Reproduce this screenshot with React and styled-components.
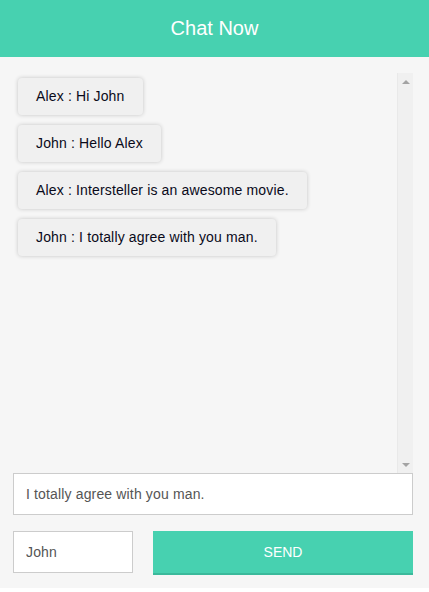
import React from "react";
import styled, { createGlobalStyle } from "styled-components";

const GlobalStyle = createGlobalStyle`
  body {
    margin: 0;
    background: #ffffff;
    font-family: "Liberation Sans", Arial, sans-serif;
  }
`;

const ChatPageStyles = styled.div`
  width: 429px;
  height: 588px;
  background: #f6f6f6;
  display: flex;
  flex-direction: column;
`;

const Header = styled.header`
  height: 57px;
  background: #47d1b0;
  color: #ffffff;
  font-size: 20px;
  display: flex;
  align-items: center;
  justify-content: center;
  flex-shrink: 0;
`;

const Body = styled.div`
  padding: 15px 16px 0 13px;
  display: flex;
  flex-direction: column;
`;

const MessagePane = styled.div`
  height: 401px;
  display: flex;
`;

const MessageList = styled.div`
  flex: 1;
  overflow: hidden;
  display: flex;
  flex-direction: column;
  align-items: flex-start;
  gap: 10px;
  padding: 6px 5px;
  box-sizing: border-box;
`;

const ScrollTrack = styled.div`
  width: 16px;
  margin-top: 1px;
  box-sizing: border-box;
  background: #f0f0f0;
  border-left: 1px solid #e9e9e9;
  display: flex;
  flex-direction: column;
  justify-content: space-between;
  align-items: center;
  padding: 7px 0 6px;
`;

const ScrollArrow = styled.span`
  width: 0;
  height: 0;
  border-left: 4px solid transparent;
  border-right: 4px solid transparent;
  ${(props) =>
    props.$down
      ? "border-top: 4px solid #a3a3a3;"
      : "border-bottom: 4px solid #a3a3a3;"}
`;

const Bubble = styled.div`
  background: #f0f0f0;
  border-radius: 4px;
  box-shadow: 0 0 4px rgba(0, 0, 0, 0.2);
  padding: 10px 18px;
  font-size: 14px;
  line-height: 17px;
  letter-spacing: 0.15px;
  color: #0a0a1a;
  white-space: nowrap;
`;

const TextInput = styled.input`
  box-sizing: border-box;
  height: 42px;
  border: 1px solid #cccccc;
  background: #ffffff;
  padding: 0 12px;
  font-family: "Liberation Sans", Arial, sans-serif;
  font-size: 14px;
  letter-spacing: 0.15px;
  color: #555555;
  outline: none;
  width: ${(props) => props.$width || "100%"};
  flex-shrink: 0;
`;

const BottomRow = styled.div`
  display: flex;
  gap: 20px;
  margin-top: 16px;
  align-items: flex-start;
`;

const SendButton = styled.button`
  flex: 1;
  height: 44px;
  border: none;
  border-bottom: 2px solid #3bb99b;
  background: #47d1b0;
  color: #ffffff;
  font-family: "Liberation Sans", Arial, sans-serif;
  font-size: 14px;
  padding: 0;
  cursor: pointer;
`;

const messages = [
  { from: "Alex", text: "Hi John" },
  { from: "John", text: "Hello Alex" },
  { from: "Alex", text: "Intersteller is an awesome movie." },
  { from: "John", text: "I totally agree with you man." },
];

const App = () => {
  return (
    <>
      <GlobalStyle />
      <ChatPageStyles>
        <Header>Chat Now</Header>
        <Body>
          <MessagePane>
            <MessageList>
              {messages.map((m, i) => (
                <Bubble key={i}>
                  {m.from} : {m.text}
                </Bubble>
              ))}
            </MessageList>
            <ScrollTrack>
              <ScrollArrow />
              <ScrollArrow $down />
            </ScrollTrack>
          </MessagePane>
          <TextInput defaultValue="I totally agree with you man." />
          <BottomRow>
            <TextInput $width="120px" defaultValue="John" />
            <SendButton>SEND</SendButton>
          </BottomRow>
        </Body>
      </ChatPageStyles>
    </>
  );
};

export default App;
